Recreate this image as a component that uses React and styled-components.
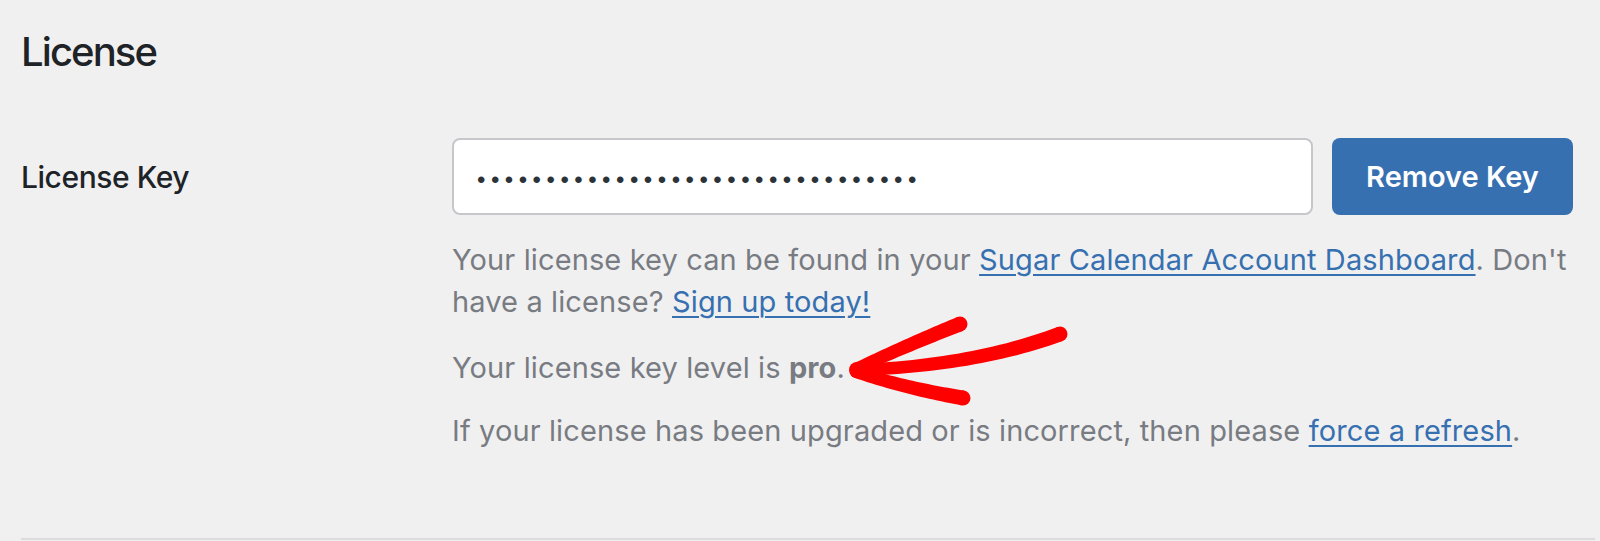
import React from "react";
import styled, { createGlobalStyle } from "styled-components";

const GlobalStyle = createGlobalStyle`
  html, body {
    margin: 0;
    padding: 0;
    background: #f0f0f1;
  }
  body {
    font-family: Inter, "Liberation Sans", Arial, sans-serif;
    -webkit-font-smoothing: antialiased;
  }
`;

const Page = styled.main`
  position: relative;
  width: 1600px;
  height: 541px;
  box-sizing: border-box;
  padding: 27px 5px 0 21px;
  display: flex;
  flex-direction: column;
  overflow: hidden;
  background: #f0f0f1;
`;

const Title = styled.h2`
  margin: 0;
  font-size: 40px;
  line-height: 49px;
  font-weight: 500;
  letter-spacing: -1.9px;
  color: #1d2327;
`;

const FormRow = styled.div`
  display: grid;
  grid-template-columns: 431px 1fr;
  margin-top: 62px;
  padding-right: 22px;
`;

const Label = styled.label`
  height: 77px;
  display: flex;
  align-items: center;
  font-size: 30px;
  font-weight: 500;
  letter-spacing: -0.45px;
  color: #1d2327;
`;

const Field = styled.div`
  display: flex;
  flex-direction: column;
  min-width: 0;
`;

const KeyRow = styled.div`
  display: flex;
  gap: 19px;
  align-items: flex-start;
`;

const KeyInput = styled.input`
  flex: 1;
  min-width: 0;
  height: 77px;
  box-sizing: border-box;
  margin: 0;
  padding: 6px 20px 0 23px;
  border: 2px solid #c6c7ca;
  border-radius: 8px;
  background: #ffffff;
  color: #2c3338;
  font-family: "Liberation Sans", Arial, sans-serif;
  font-size: 24px;
  letter-spacing: 5.5px;
  outline: none;
`;

const PrimaryButton = styled.button`
  width: 241px;
  height: 77px;
  flex: none;
  margin: 0;
  border: 0;
  border-radius: 8px;
  background: #3770b0;
  color: #ffffff;
  font-family: Inter, "Liberation Sans", Arial, sans-serif;
  font-size: 29px;
  font-weight: 600;
  cursor: pointer;
`;

const Description = styled.p`
  margin: ${(p) => p.$top}px 0 0;
  font-size: 29px;
  line-height: 42px;
  letter-spacing: 0.12px;
  color: #787c82;
`;

const Link = styled.a`
  color: #3770b0;
  text-decoration: underline;
  text-decoration-thickness: 2px;
  text-underline-offset: 4px;
`;

const Strong = styled.strong`
  font-weight: 700;
`;

const Divider = styled.hr`
  margin: auto 0 1px;
  border: 0;
  height: 2px;
  background: #dcdcde;
`;

const Overlay = styled.svg`
  position: absolute;
  top: 0;
  left: 0;
  width: 1600px;
  height: 541px;
  pointer-events: none;
`;

function taperedStroke(p0, c, p2, w0, w1, steps = 28) {
  const left = [];
  const right = [];
  for (let i = 0; i <= steps; i++) {
    const t = i / steps;
    const mt = 1 - t;
    const x = mt * mt * p0[0] + 2 * mt * t * c[0] + t * t * p2[0];
    const y = mt * mt * p0[1] + 2 * mt * t * c[1] + t * t * p2[1];
    const dx = 2 * mt * (c[0] - p0[0]) + 2 * t * (p2[0] - c[0]);
    const dy = 2 * mt * (c[1] - p0[1]) + 2 * t * (p2[1] - c[1]);
    const len = Math.hypot(dx, dy) || 1;
    const nx = -dy / len;
    const ny = dx / len;
    const w = (w0 + (w1 - w0) * t) / 2;
    left.push([x + nx * w, y + ny * w]);
    right.push([x - nx * w, y - ny * w]);
  }
  const pts = left.concat(right.reverse());
  return "M" + pts.map((p) => p[0].toFixed(2) + "," + p[1].toFixed(2)).join(" L") + " Z";
}

const strokes = [
  { p0: [856, 369], c: [905, 346], p2: [960, 324], w0: 12, w1: 15 },
  { p0: [856, 370], c: [974, 366], p2: [1060, 334], w0: 12, w1: 15 },
  { p0: [856, 372], c: [905, 388], p2: [963, 398], w0: 12, w1: 15 },
];

function Arrow() {
  return (
    <Overlay viewBox="0 0 1600 541" aria-hidden="true">
      <g fill="#ff0000">
        <circle cx="857" cy="370" r="8" />
        {strokes.map((s, i) => (
          <g key={i}>
            <path d={taperedStroke(s.p0, s.c, s.p2, s.w0, s.w1)} />
            <circle cx={s.p0[0]} cy={s.p0[1]} r={s.w0 / 2} />
            <circle cx={s.p2[0]} cy={s.p2[1]} r={s.w1 / 2} />
          </g>
        ))}
      </g>
    </Overlay>
  );
}

export default function App() {
  return (
    <>
      <GlobalStyle />
      <Page>
        <Title>License</Title>
        <FormRow>
          <Label htmlFor="license-key">License Key</Label>
          <Field>
            <KeyRow>
              <KeyInput
                id="license-key"
                type="password"
                readOnly
                value={"x".repeat(32)}
              />
              <PrimaryButton type="button">Remove Key</PrimaryButton>
            </KeyRow>
            <Description $top={24}>
              Your license key can be found in your{" "}
              <Link href="#">Sugar Calendar Account Dashboard</Link>. Don't
              have a license? <Link href="#">Sign up today!</Link>
            </Description>
            <Description $top={24}>
              Your license key level is <Strong>pro</Strong>.
            </Description>
            <Description $top={21}>
              If your license has been upgraded or is incorrect, then please{" "}
              <Link href="#">force a refresh</Link>.
            </Description>
          </Field>
        </FormRow>
        <Divider />
        <Arrow />
      </Page>
    </>
  );
}
